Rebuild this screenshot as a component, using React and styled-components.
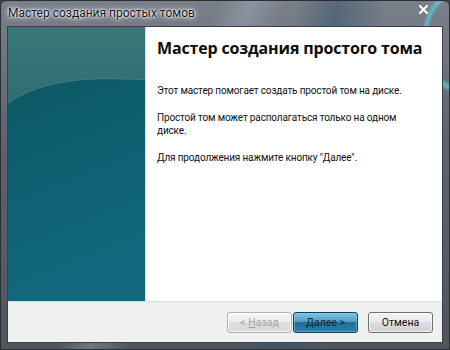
import React from "react";
import styled, { createGlobalStyle } from "styled-components";

const GlobalStyle = createGlobalStyle`
  html, body {
    margin: 0;
    padding: 0;
    background: #3d4247;
  }
  * {
    box-sizing: border-box;
  }
`;

const Window = styled.div`
  width: 450px;
  height: 350px;
  display: flex;
  flex-direction: column;
  border: 1px solid #2b2f34;
  border-radius: 6px 6px 0 0;
  overflow: hidden;
  background:
    linear-gradient(115deg, transparent 0 36%, rgba(170, 185, 200, 0.35) 41%, transparent 47%),
    linear-gradient(100deg, transparent 0 58%, rgba(50, 80, 110, 0.5) 66%, transparent 76%),
    radial-gradient(ellipse 40px 60px at 455px 40px, transparent 70%, rgba(90, 200, 230, 0.8) 78%, transparent 88%),
    linear-gradient(180deg, #79808a 0%, #5c636c 40%, #4f565e 100%);
  font-family: Roboto, "Noto Sans", sans-serif;
`;

const TitleBar = styled.div`
  height: 25px;
  flex: none;
  display: flex;
  align-items: center;
  justify-content: space-between;
  padding: 0 21px 2px 7px;
`;

const Caption = styled.span`
  font-size: 12px;
  color: #151515;
  text-shadow: 0 0 6px #fff, 0 0 3px #fff, 0 0 2px #fff;
`;

const CloseGlyph = styled.svg`
  width: 9px;
  height: 9px;
  margin-top: -6px;
`;

const Client = styled.div`
  flex: 1;
  display: flex;
  flex-direction: column;
  margin: 0 6px 6px 6px;
  border: 1px solid #3a4046;
  background: #fff;
`;

const Main = styled.div`
  flex: 1;
  display: flex;
`;

const SidePanel = styled.div`
  width: 138px;
  flex: none;
  border-right: 1px solid #e3d8df;
  display: flex;
`;

const SideArt = styled.svg`
  width: 100%;
  height: 100%;
  display: block;
`;

const Page = styled.div`
  flex: 1;
  padding: 11px 12px 0 11px;
  color: #111;
`;

const Heading = styled.h1`
  margin: 0 0 26px;
  font-family: "Open Sans", "Noto Sans", sans-serif;
  font-weight: 700;
  font-size: 16px;
  line-height: 20px;
  color: #0c0c0c;
  letter-spacing: -0.15px;
`;

const Para = styled.p`
  margin: 0 0 14px;
  max-width: 250px;
  font-size: 10px;
  line-height: 13px;
  letter-spacing: -0.15px;
`;

const Footer = styled.div`
  height: 41px;
  flex: none;
  background: #f0f0f0;
  border-top: 1px solid #dcdcdc;
  display: flex;
  align-items: center;
  justify-content: flex-end;
  padding: 0 9px 0 0;
`;

const Button = styled.button`
  width: 65px;
  height: 21px;
  margin-left: ${(p) => p.$gap || 0}px;
  border-radius: 3px;
  font-family: Roboto, "Noto Sans", sans-serif;
  font-size: 10.5px;
  padding: 0;
  border: 1px solid ${(p) => (p.$variant === "primary" ? "#0f3f5c" : p.$variant === "disabled" ? "#b0b4b7" : "#707070")};
  color: ${(p) => (p.$variant === "disabled" ? "#a3a7aa" : p.$variant === "primary" ? "#08263a" : "#111")};
  background: ${(p) =>
    p.$variant === "primary"
      ? "linear-gradient(180deg, #7fc2df 0%, #4f9ec3 45%, #1f6f97 50%, #2a80a8 100%)"
      : p.$variant === "disabled"
      ? "linear-gradient(180deg, #f6f6f6 0%, #ececec 45%, #dedede 50%, #d8d8d8 100%)"
      : "linear-gradient(180deg, #f4f4f4 0%, #ebebeb 45%, #dddddd 50%, #d2d2d2 100%)"};
  box-shadow: inset 0 0 0 1px ${(p) => (p.$variant === "primary" ? "rgba(140,210,240,0.5)" : "rgba(255,255,255,0.7)")};
`;

const Key = styled.u`
  text-decoration: underline;
`;

export default function App() {
  return (
    <>
      <GlobalStyle />
      <Window>
        <TitleBar>
          <Caption>Мастер создания простых томов</Caption>
          <CloseGlyph viewBox="0 0 9 9">
            <path d="M1 1 L8 8 M8 1 L1 8" stroke="#fff" strokeWidth="2" strokeLinecap="round" />
          </CloseGlyph>
        </TitleBar>
        <Client>
          <Main>
            <SidePanel>
              <SideArt viewBox="0 0 138 276" preserveAspectRatio="none">
                <defs>
                  <linearGradient id="low" x1="0" y1="0" x2="0.2" y2="1">
                    <stop offset="0" stopColor="#0a535f" />
                    <stop offset="0.5" stopColor="#0e5f6f" />
                    <stop offset="1" stopColor="#12697d" />
                  </linearGradient>
                  <linearGradient id="high" x1="0" y1="0" x2="0" y2="1">
                    <stop offset="0" stopColor="#377879" />
                    <stop offset="1" stopColor="#2f6d72" />
                  </linearGradient>
                </defs>
                <rect width="138" height="276" fill="url(#low)" />
                <path d="M0 0 H138 V53 L100 52 C60 52 22 60 0 77 Z" fill="url(#high)" />
                <path d="M0 77 C22 60 60 52 100 52 L138 53" fill="none" stroke="#4a8487" strokeWidth="0.8" />
              </SideArt>
            </SidePanel>
            <Page>
              <Heading>Мастер создания простого тома</Heading>
              <Para>Этот мастер помогает создать простой том на диске.</Para>
              <Para>Простой том может располагаться только на одном диске.</Para>
              <Para>Для продолжения нажмите кнопку "Далее".</Para>
            </Page>
          </Main>
          <Footer>
            <Button $variant="disabled" disabled>
              &lt; <Key>Н</Key>азад
            </Button>
            <Button $variant="primary" $gap={1}>
              <Key>Д</Key>алее &gt;
            </Button>
            <Button $gap={10}>Отмена</Button>
          </Footer>
        </Client>
      </Window>
    </>
  );
}
